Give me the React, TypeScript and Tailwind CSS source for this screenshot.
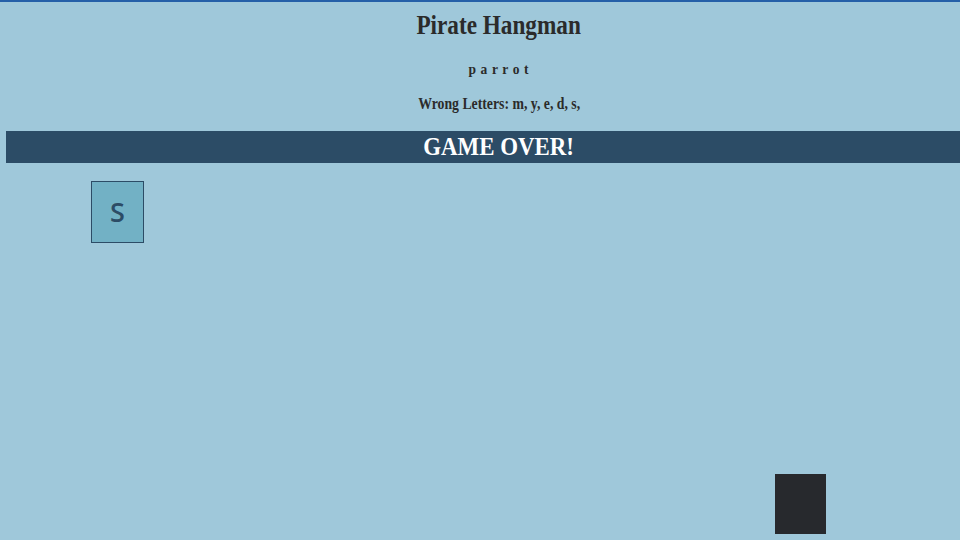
import React from "react";

const serif = "font-['Liberation_Serif','Times_New_Roman',serif]";

export default function App() {
  const word = ["p", "a", "r", "r", "o", "t"];
  const wrong = ["m", "y", "e", "d", "s"];

  return (
    <div className="relative h-[540px] w-[960px] overflow-hidden border-t-2 border-[#2560a8] bg-[#9fc8da]">
      <div className="ml-[6px] w-[986px]">
        <header className={`flex flex-col items-center ${serif} text-[#2b2b2b]`}>
          <h1 className="mt-[6px] inline-block scale-x-[0.86] text-[27px] font-bold leading-[34px]">
            Pirate Hangman
          </h1>
          <p className="mt-[17px] inline-block scale-x-[0.9] text-[15px] font-bold leading-[20px] tracking-[0.7px]">
            {word.join(" ")}
          </p>
          <p className="mt-[15px] inline-block scale-x-[0.86] text-[16px] font-bold leading-[20px]">
            Wrong Letters: {wrong.map((l) => `${l}, `).join("").trimEnd()}
          </p>
        </header>

        <div className={`mt-[17px] flex h-[32px] items-center justify-center bg-[#2c4c66] ${serif}`}>
          <span className="inline-block scale-x-[0.88] text-[26px] font-bold leading-none text-white">GAME OVER!</span>
        </div>

        <div className="mt-[18px] ml-[85px] flex h-[62px] w-[53px] items-center justify-center border-[1.5px] border-[#2c4c66] bg-[#72b1c5] font-['Open_Sans',sans-serif] text-[27px] font-semibold text-[#2c4c66]">
          S
        </div>
      </div>

      <div className="absolute left-[775px] top-[472px] h-[60px] w-[51px] bg-[#27292d]" />
    </div>
  );
}
